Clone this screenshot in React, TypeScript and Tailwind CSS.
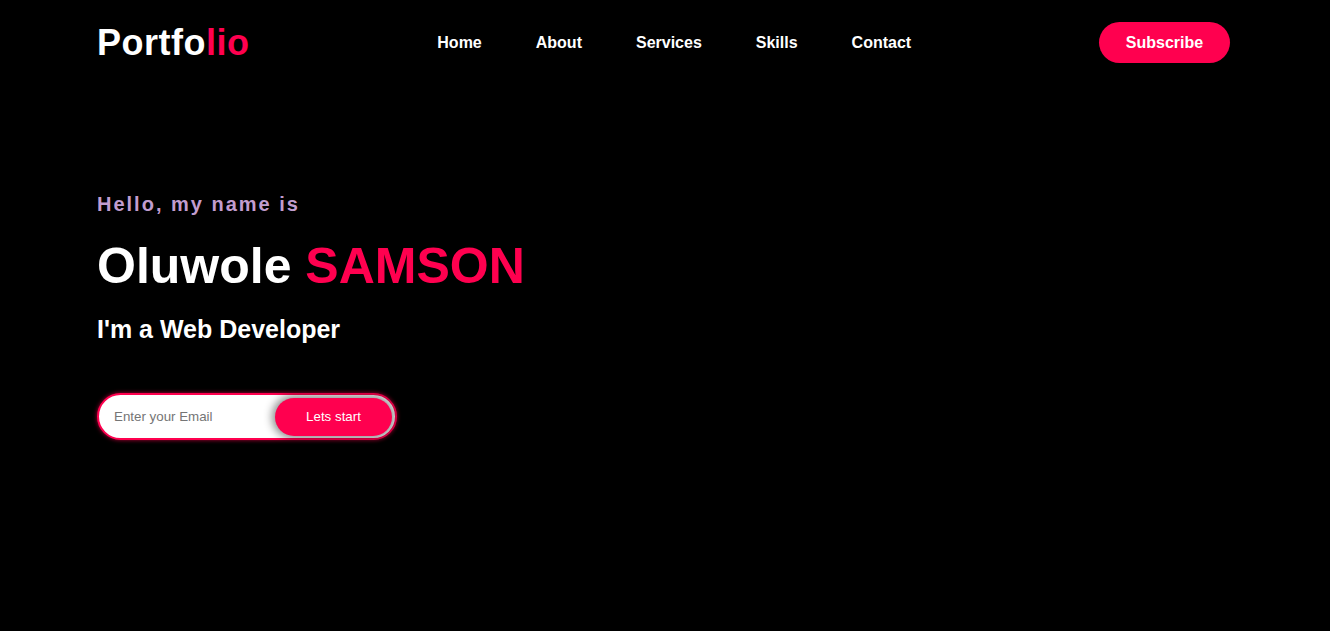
export default function App() {
  const links = ['Home', 'About', 'Services', 'Skills', 'Contact'];

  return (
    <div className="min-h-[631px] bg-black text-white font-['Liberation_Sans',Arial,sans-serif]">
      <header className="flex items-center justify-between pl-[97px] pr-[100px] pt-[22px]">
        <h1 className="text-[36px] font-bold leading-[41px] tracking-[0.5px]">
          Portfo<span className="text-[#ff004f]">lio</span>
        </h1>
        <nav className="flex gap-[54px] text-[16px] font-bold">
          {links.map((link) => (
            <a key={link} href="#" className="text-white">
              {link}
            </a>
          ))}
        </nav>
        <button className="w-[131px] h-[41px] rounded-full bg-[#ff004f] text-[16px] font-bold text-white">
          Subscribe
        </button>
      </header>

      <section className="pl-[97px] pt-[129px]">
        <p className="text-[20px] font-bold tracking-[2px] text-[#c29dcf] leading-[24px]">
          Hello, my name is
        </p>
        <h2 className="mt-[22px] text-[50px] font-bold leading-[56px]">
          Oluwole <span className="text-[#ff004f]">SAMSON</span>
        </h2>
        <h3 className="mt-[20px] text-[25px] font-bold leading-[30px]">I'm a Web Developer</h3>

        <form
          className="mt-[49px] flex items-center w-[300px] h-[47px] rounded-full bg-white border-2 border-[#ff004f] shadow-[0_0_4px_rgba(255,0,79,0.7)] pr-[3px]"
          onSubmit={(e) => e.preventDefault()}
        >
          <input
            type="email"
            placeholder="Enter your Email"
            className="flex-1 min-w-0 pl-[15px] bg-transparent outline-none text-[13.33px] text-[#333] placeholder:text-[#757575]"
          />
          <button
            type="submit"
            className="w-[117px] h-[38px] rounded-full bg-[#ff004f] text-[13.33px] text-white shadow-[0_0_8px_3px_rgba(0,0,0,0.45)]"
          >
            Lets start
          </button>
        </form>
      </section>
    </div>
  );
}
